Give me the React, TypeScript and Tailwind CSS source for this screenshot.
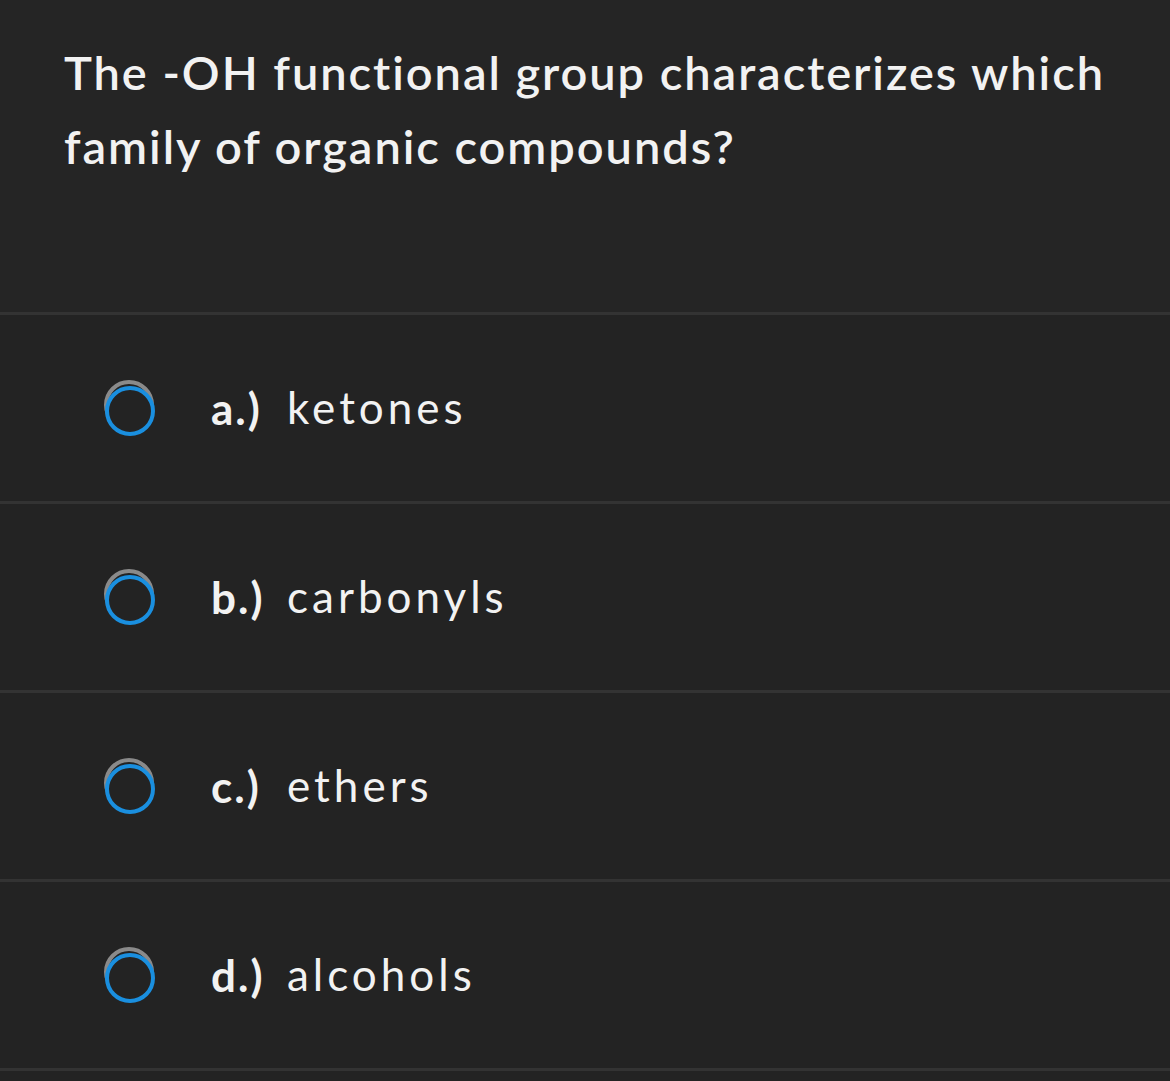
const options = [
  { letter: 'a.)', text: 'ketones' },
  { letter: 'b.)', text: 'carbonyls' },
  { letter: 'c.)', text: 'ethers' },
  { letter: 'd.)', text: 'alcohols' },
];

const Radio = () => (
  <div className="relative h-[56px] w-[52px] shrink-0">
    <div className="absolute left-0 top-0 h-[50px] w-[50px] rounded-full border-[4px] border-[#8a8a8a]" />
    <div className="absolute left-[1px] top-[6px] h-[50px] w-[50px] rounded-full border-[4px] border-[#1a8fdf] bg-[#232323]" />
  </div>
);

export default function App() {
  return (
    <div
      className="min-h-[1081px] w-full bg-[#232323] text-[#f2f2f2]"
      style={{ fontFamily: 'Lato, "Open Sans", sans-serif' }}
    >
      <div className="h-[312px] bg-[#252525] px-[64px] pt-[35px]">
        <h1 className="text-[47px] font-semibold leading-[74px] tracking-[1.95px]">
          The -OH functional group characterizes which family of organic compounds?
        </h1>
      </div>
      <div className="h-[3px] bg-[#333333]" />
      {options.map((o) => (
        <div key={o.letter}>
          <div className="flex h-[186px] items-center pl-[104px]">
            <Radio />
            <span className="ml-[55px] w-[76px] text-[44px] font-bold tracking-[2px]">{o.letter}</span>
            <span className="-mt-[3px] text-[44px] font-normal tracking-[4px]">{o.text}</span>
          </div>
          <div className="h-[3px] bg-[#333333]" />
        </div>
      ))}
    </div>
  );
}
